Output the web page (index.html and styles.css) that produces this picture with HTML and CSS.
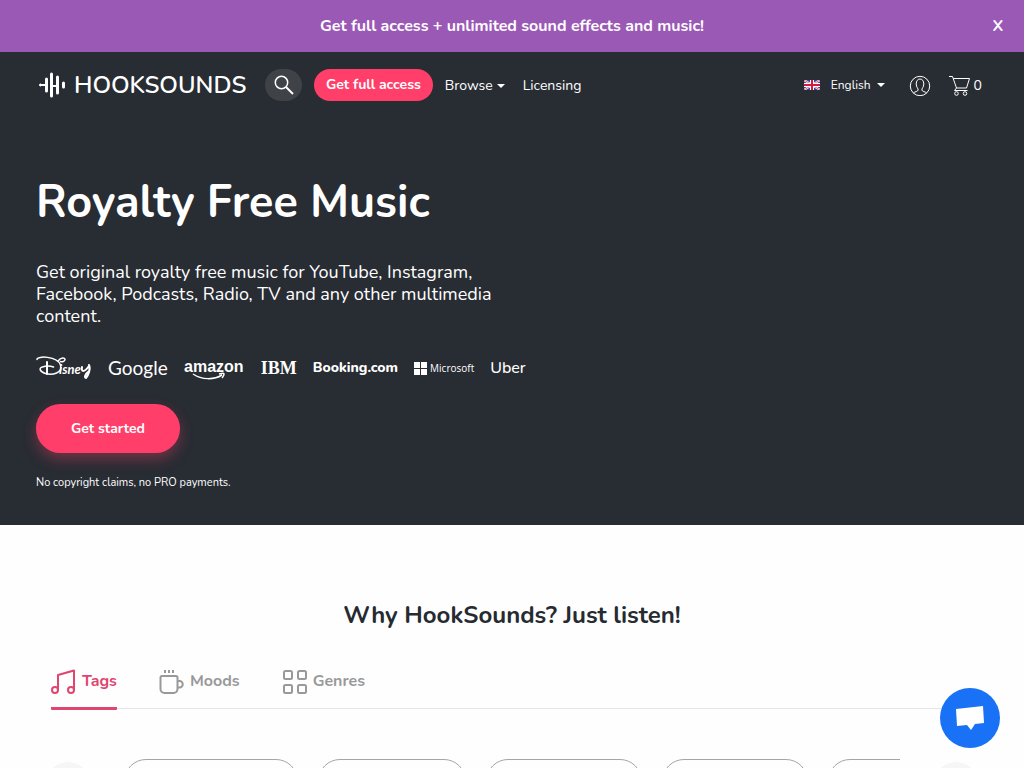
FILE: index.html
```html
<!DOCTYPE html>
<html lang="en">
  <head>
    <meta charset="utf-8" />
    <meta name="viewport" content="width=device-width, initial-scale=1" />
    <title>Royalty Free Music</title>
    <link rel="stylesheet" href="styles.css">
  </head>

  <body>
    <div class="promo">
      <a href="#pricing" class="promo-link">Get full access + unlimited sound effects and music!</a>
      <button type="button" class="promo-close">X</button>
    </div>

    <header class="navbar">
      <a href="#home" class="brand">
        <svg class="brand-mark" width="28" height="30" viewBox="0 0 28 30" fill="none" stroke="#fff" stroke-width="3" stroke-linecap="round">
          <path d="M8.500 9v12M13.500 4v22M19.500 7v16M25.500 13v4" />
          <path d="M2.500 15h6M13.500 16h6" stroke-width="2" />
          <circle cx="2.500" cy="15" r="1" stroke-width="1" fill="#fff" />
        </svg>
        <span class="brand-name">HOOKSOUNDS</span>
      </a>
      <button type="button" class="search-btn" aria-label="Search">
        <svg width="20" height="20" viewBox="0 0 20 20" fill="none" stroke="#fff" stroke-width="1.500">
          <circle cx="7.500" cy="7.500" r="6.200" />
          <path d="M12 12l7 7" stroke-width="2" />
        </svg>
      </button>
      <a href="#pricing" class="access-btn">Get full access</a>
      <nav class="nav-links">
        <a href="#browse">Browse<span class="caret"></span></a>
        <a href="#licensing">Licensing</a>
      </nav>
      <div class="nav-tools">
        <button type="button" class="language">
          <svg width="16" height="10" viewBox="0 0 16 10">
            <path fill="#35479a" d="M0 0h16v10H0z" />
            <path stroke="#fff" stroke-width="2" d="M0 0l16 10M16 0L0 10" />
            <path stroke="#d8193b" stroke-width=".7" d="M0 0l16 10M16 0L0 10" />
            <path stroke="#fff" stroke-width="4" d="M8 0v10M0 5h16" />
            <path stroke="#d8193b" stroke-width="2" d="M8 0v10M0 5h16" />
          </svg>
          <span>English</span>
          <span class="caret"></span>
        </button>
        <a href="#account" class="account" aria-label="Account">
          <svg width="22" height="22" viewBox="0 0 22 22" fill="none" stroke="#fff">
            <circle cx="11" cy="12" r="9.700" />
            <path d="M4.500 19c1-1.300 4.500-1.500 4.700-3 .2-1.300-2-2.800-2-6C7.200 7 8.600 5 11 5s3.800 2 3.800 5c0 3.200-2.200 4.700-2 6 .2 1.500 3.700 1.700 4.700 3" />
          </svg>
        </a>
        <a href="#cart" class="cart">
          <svg width="22" height="22" viewBox="0 0 22 22" fill="none" stroke="#fff">
            <path d="M0 2.500h3.500l4 11.500h10l3-9.500H4.500M7.500 14l-2 2.500h13" />
            <circle cx="7.500" cy="19.500" r="1.800" />
            <circle cx="16" cy="19.500" r="1.800" />
          </svg>
          <span>0</span>
        </a>
      </div>
    </header>

    <section class="hero">
      <h1>Royalty Free Music</h1>
      <p class="hero-text">Get original royalty free music for YouTube, Instagram, Facebook, Podcasts, Radio, TV and any other multimedia content.</p>
      <ul class="clients">
        <li>
          <svg width="56" height="24" viewBox="0 0 56 24" fill="none" stroke="#fff" stroke-linecap="round">
            <path d="M1 3.500C1-.5 21 0 24.500 9c2.500 8-8 10.500-15 8.500-6-2-7-5.500-3-6.500 4-1.500 8-1 11 0" stroke-width="1.500" />
            <path d="M11 6v12" stroke-width="2" />
            <path d="M22 5c3-4 7-3.500 7-1.500 0 2-3 2.500-4.500 2" stroke-width="1.500" />
            <text class="disney" x="23" y="18">isne</text>
            <path d="M46 11c-1 5 2 6 7-1M53 9c2 4-1 11-3 13-2 0-1-4 3-7" stroke-width="2" />
          </svg>
        </li>
        <li class="google">Google</li>
        <li>
          <svg width="61" height="24" viewBox="0 0 61 24">
            <text class="amazon" x="0" y="16" fill="#fff">amazon</text>
            <path d="M9 18c9 6 21 6 29 1M35 18c4-1 5-1 5 0s-1 3-2 4" fill="none" stroke="#fff" stroke-width="1.500" />
          </svg>
        </li>
        <li class="ibm">IBM</li>
        <li class="booking">Booking.com</li>
        <li class="microsoft">
          <svg width="13" height="13" viewBox="0 0 13 13">
            <path fill="#fff" d="M0 0h6v6H0zM7 0h6v6H7zM0 7h6v6H0zM7 7h6v6H7z" />
          </svg>
          Microsoft
        </li>
        <li class="uber">Uber</li>
      </ul>
      <a href="#start" class="start-btn">Get started</a>
      <p class="hero-note">No copyright claims, no PRO payments.</p>
    </section>

    <main class="why">
      <h2>Why HookSounds? Just listen!</h2>
      <div class="tabs">
        <button type="button" class="tab active">
          <svg width="26" height="26" viewBox="0 0 26 26" fill="none" stroke="currentColor" stroke-width="2" stroke-linejoin="round">
            <circle cx="4" cy="21" r="3" />
            <circle cx="20" cy="21" r="3" />
            <path d="M7 21V6l16-4.500V21" />
          </svg>
          Tags
        </button>
        <button type="button" class="tab">
          <svg width="26" height="26" viewBox="0 0 26 26" fill="none" stroke="currentColor" stroke-width="2">
            <path d="M3 7h14a1.500 1.500 0 0 1 1.500 1.500V20a4 4 0 0 1-4 4h-9a4 4 0 0 1-4-4V8.500A1.500 1.500 0 0 1 3 7zM18.500 12h2a3.200 3.200 0 0 1 0 6.500h-2M6 1v3M10 1v3M14 1v3" />
          </svg>
          Moods
        </button>
        <button type="button" class="tab">
          <svg width="26" height="26" viewBox="0 0 26 26" fill="none" stroke="currentColor" stroke-width="2">
            <rect x="2" y="2" width="8" height="8" rx="1.500" />
            <rect x="16" y="2" width="8" height="8" rx="1.500" />
            <rect x="2" y="16" width="8" height="8" rx="1.500" />
            <rect x="16" y="16" width="8" height="8" rx="1.500" />
          </svg>
          Genres
        </button>
      </div>
      <div class="carousel">
        <button type="button" class="arrow" aria-label="Previous"></button>
        <ul class="pills">
          <li></li>
          <li></li>
          <li></li>
          <li></li>
          <li></li>
        </ul>
        <button type="button" class="arrow" aria-label="Next"></button>
      </div>
    </main>

    <button type="button" class="chat" aria-label="Open chat">
      <svg width="30" height="26" viewBox="0 0 30 26">
        <path fill="#fff" d="M1 4l27-3 1 17-9 1-4 6-4-5-10 1z" />
      </svg>
    </button>
  </body>
</html>
```

FILE: styles.css
```css
* {
  box-sizing: border-box;
}

body {
  display: flex;
  flex-direction: column;
  height: 100vh;
  margin: 0;
  overflow: hidden;
  background: #fefefe;
  color: #262a31;
  font-family: Nunito, Lato, sans-serif;
}

a {
  color: inherit;
  text-decoration: none;
}

button {
  padding: 0;
  border: 0;
  background: none;
  color: inherit;
  font-family: inherit;
  cursor: pointer;
}

ul {
  margin: 0;
  padding: 0;
  list-style: none;
}

svg {
  display: block;
  flex-shrink: 0;
}

.promo {
  display: flex;
  flex-shrink: 0;
  align-items: center;
  height: 52px;
  padding: 0 20px;
  background: #9b59b6;
  color: #fff;
  font-size: 16px;
  font-weight: 700;
}

.promo-link {
  flex: 1;
  padding-left: 12px;
  text-align: center;
}

.promo-close {
  width: 12px;
  font-size: 16px;
  font-weight: 700;
}

.navbar {
  display: flex;
  flex-shrink: 0;
  align-items: center;
  height: 66px;
  padding: 0 42px 0 38px;
  background: #282c33;
  color: #fff;
  font-size: 14px;
}

.brand {
  display: flex;
  align-items: center;
  gap: 8px;
  width: 227px;
}

.brand-name {
  font-size: 24px;
  font-weight: 600;
  line-height: 30px;
}

.search-btn {
  display: flex;
  align-items: center;
  justify-content: center;
  width: 37px;
  height: 32px;
  border-radius: 16px;
  background: #3f4247;
}

.access-btn {
  margin: 0 12px;
  padding: 0 12px;
  border-radius: 16px;
  background: #ff3e69;
  font-weight: 700;
  line-height: 32px;
}

.nav-links {
  display: flex;
  gap: 18px;
}

.caret {
  display: inline-block;
  margin-left: 4px;
  border: 4px solid transparent;
  border-top-color: #fff;
  border-bottom: 0;
  vertical-align: middle;
}

.nav-tools {
  display: flex;
  align-items: center;
  margin-left: auto;
}

.language {
  display: flex;
  align-items: center;
  font-size: 12px;
}

.language svg {
  margin-right: 11px;
}

.language .caret {
  margin-left: 6px;
}

.account {
  margin: 0 18px 0 24px;
}

.cart {
  display: flex;
  align-items: center;
  gap: 3px;
}

.hero {
  flex-shrink: 0;
  height: 407px;
  padding: 57px 36px 0;
  background: #282c33;
  color: #fff;
}

.hero h1 {
  margin: 0 0 30px;
  font-size: 45px;
  line-height: 56px;
}

.hero-text {
  max-width: 480px;
  margin: 0;
  font-size: 18px;
  line-height: 22px;
}

.clients {
  display: flex;
  align-items: center;
  gap: 16px;
  height: 24px;
  margin: 29px 0 24px;
  line-height: 24px;
}

.disney {
  fill: #fff;
  stroke: none;
  font: italic 700 13px Lato, sans-serif;
}

.google {
  font: 19px/24px Lato, sans-serif;
}

.amazon {
  font: 700 16px "Liberation Sans", sans-serif;
}

.ibm {
  font: 700 18px/24px "Liberation Serif", serif;
}

.booking {
  font-size: 14px;
  font-weight: 800;
}

.microsoft {
  display: flex;
  align-items: center;
  gap: 3px;
  font: 500 10px/24px "Open Sans", sans-serif;
}

.uber {
  font-size: 16px;
  font-weight: 500;
}

.start-btn {
  display: inline-block;
  padding: 0 35px;
  border-radius: 25px;
  background: #ff3e69;
  box-shadow: 0 6px 14px rgba(255, 62, 105, 0.35);
  font-size: 14px;
  font-weight: 700;
  line-height: 49px;
}

.hero-note {
  margin: 20px 0 0;
  font-size: 11px;
  line-height: 20px;
}

.why {
  flex: 1;
  min-height: 0;
  padding: 75px 51px 0;
  overflow: hidden;
}

.why h2 {
  margin: 0 0 39px;
  font-size: 24px;
  line-height: 30px;
  text-align: center;
}

.tabs {
  display: flex;
  gap: 42px;
  height: 40px;
  border-bottom: 1px solid #e6e6e6;
}

.tab {
  display: flex;
  align-items: flex-start;
  gap: 5px;
  height: 41px;
  color: #999;
  font-size: 16px;
  font-weight: 700;
  line-height: 24px;
}

.tab.active {
  border-bottom: 3px solid #e0456f;
  border-radius: 1px;
  color: #e0456f;
}

.carousel {
  display: flex;
  gap: 34px;
  margin: 50px -5px 0;
}

.arrow {
  width: 44px;
  height: 44px;
  margin-top: 3px;
  border-radius: 50%;
  background: #f6f6f6;
}

.pills {
  display: grid;
  flex: 1;
  grid-template-columns: 174px 148px 156px 146px 150px;
  gap: 20px;
  overflow: hidden;
}

.pills li {
  height: 50px;
  border: 1px solid #a5a5a5;
  border-radius: 22px;
}

.chat {
  position: fixed;
  right: 24px;
  bottom: 20px;
  display: flex;
  align-items: center;
  justify-content: center;
  width: 60px;
  height: 60px;
  border-radius: 50%;
  background: #1972f5;
}
```
